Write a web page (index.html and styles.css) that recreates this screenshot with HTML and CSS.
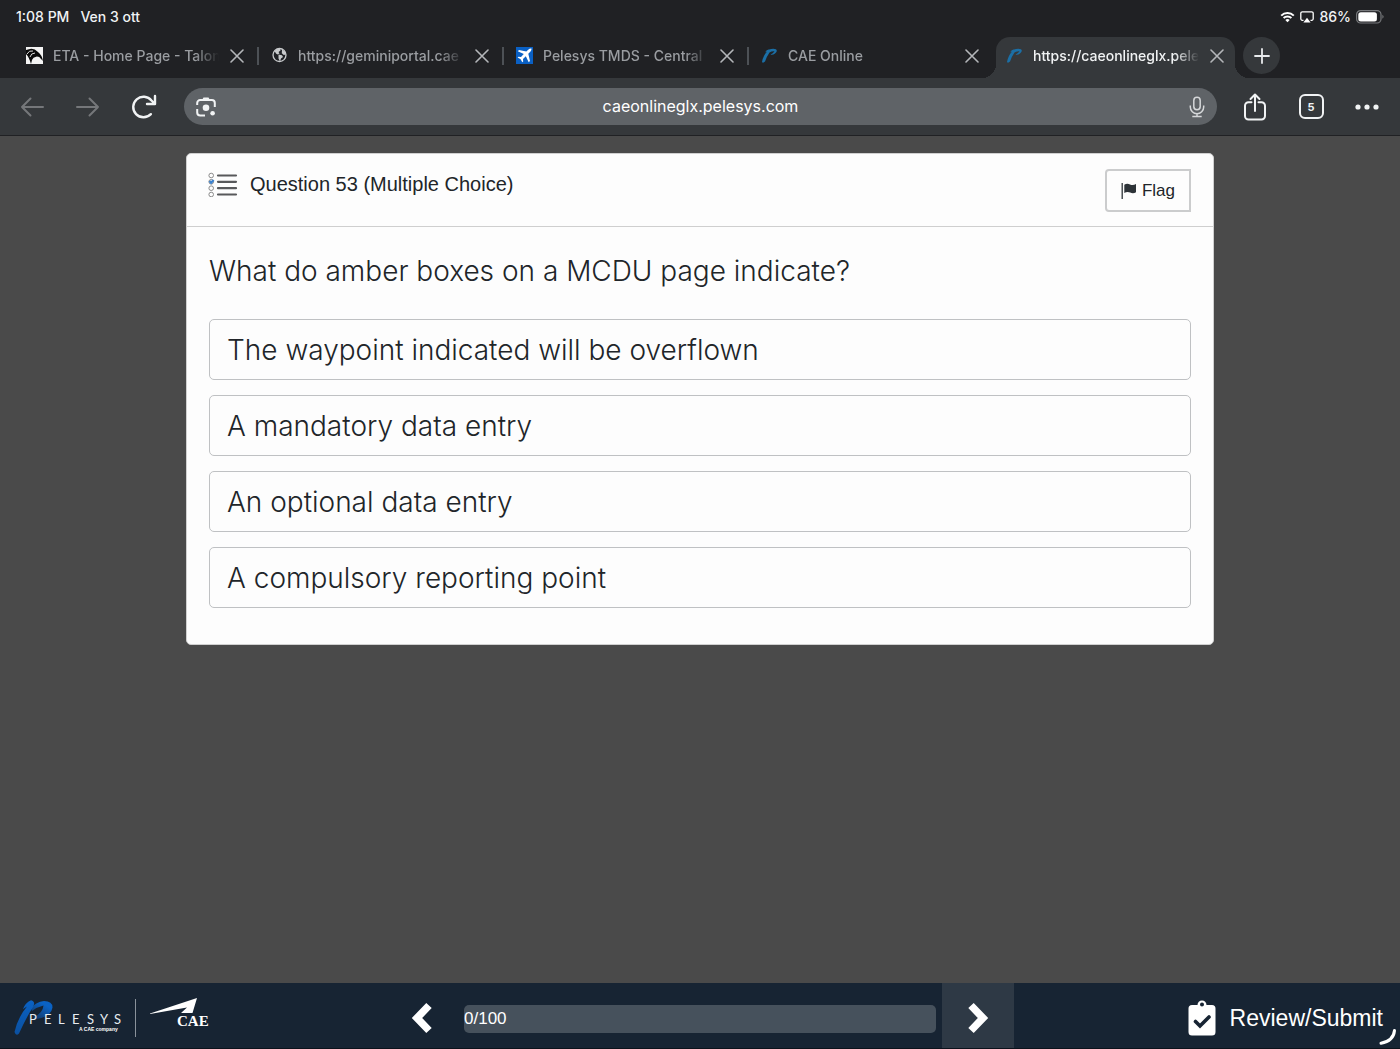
FILE: index.html
```html
<!DOCTYPE html>
<html lang="en">
<head>
<meta charset="utf-8">
<meta name="viewport" content="width=device-width, initial-scale=1">
<title>caeonlineglx.pelesys.com</title>
<link rel="stylesheet" href="styles.css">
</head>
<body>
<svg class="defs" width="0" height="0" aria-hidden="true">
  <symbol id="close" viewBox="0 0 14 14"><path d="M1 1l12 12M13 1L1 13" fill="none" stroke="currentColor" stroke-width="1.6" stroke-linecap="round"/></symbol>
  <symbol id="swoosh" viewBox="0 0 17 17"><path d="M1 15Q2 9 6 4.500L4 5.500Q6 2 8 2.500 12 1.300 15 2.200 17 4 14 6.500 11.500 8.500 9.500 7.500 12 6.500 13.500 4.200 10.500 4 8.500 5.500 6 9 4 14.500 2 16.500 1 15z" fill="#1b6fa6"/></symbol>
</svg>

<header class="browser">
  <div class="status">
    <span class="status-group"><span>1:08 PM</span><span>Ven 3 ott</span></span>
    <span class="status-group status-right">
      <svg width="15" height="12" viewBox="0 0 15 12"><path d="M1.200 4.600a9 9 0 0 1 12.600 0M3.600 7a5.600 5.600 0 0 1 7.800 0" fill="none" stroke="#fff" stroke-width="2"/><path d="M7.500 11.200L5.300 9a3.200 3.200 0 0 1 4.400 0z" fill="#fff"/></svg>
      <svg width="14" height="12" viewBox="0 0 14 12"><path d="M3.500 9.300H2.300A1.500 1.500 0 0 1 .8 7.800V2.300A1.500 1.500 0 0 1 2.300.8h9.400a1.500 1.500 0 0 1 1.500 1.500v5.500a1.500 1.500 0 0 1-1.500 1.500h-1.200" fill="none" stroke="#fff" stroke-width="1.300"/><path d="M7 6.800l3.600 4.700H3.400z" fill="#fff"/></svg>
      <span>86%</span>
      <svg width="28" height="14" viewBox="0 0 28 14"><rect x=".6" y=".6" width="24.400" height="12.400" rx="4" fill="none" stroke="#77797c" stroke-width="1.200"/><rect x="2.300" y="2.200" width="18.600" height="9.200" rx="2.500" fill="#fff"/><path d="M26.400 4.800q2.400 2 0 4z" fill="#77797c"/></svg>
    </span>
  </div>

  <nav class="tabs" aria-label="Tabs">
    <div class="tab">
      <svg width="17" height="17" viewBox="0 0 17 17"><rect width="17" height="17" fill="#f4f4f4"/><path d="M0 3L4 2Q8 1 12 5q4 3 5 9l-2-2a5 5 0 0 0-9 1L5 17Q3 10 0 7z" fill="#0b0b0b"/><path d="M1 7Q3 3 7 4M4 10q1-4 5-4" stroke="#ddd" fill="none"/><path d="M14 17l3-3v3zM0 8q3 3 4 9H0z" fill="#f4f4f4"/></svg>
      <a class="tab-title" href="#">ETA - Home Page - Talon</a>
      <button class="tab-close" aria-label="Close tab"><svg width="14" height="14"><use href="#close"/></svg></button>
    </div>
    <div class="tab">
      <svg width="17" height="17" viewBox="0 0 17 17"><circle cx="8.500" cy="8" r="6.500" fill="#1e2024" stroke="#c8cacc" stroke-width="1.300"/><path d="M3.500 4Q5.500 1.500 9 1.700L9.500 3.500 7.500 5 8.500 6.500 6.500 7.500 5 6.500zM7.500 7.500l3.500.8 1 1.700-2 1.500-1 3-1.500-3zM11 2.500l3 2 .8 3-2 .5-2-1.800z" fill="#c8cacc"/></svg>
      <a class="tab-title" href="#">https://geminiportal.cae</a>
      <button class="tab-close" aria-label="Close tab"><svg width="14" height="14"><use href="#close"/></svg></button>
    </div>
    <div class="tab">
      <svg width="17" height="17" viewBox="0 0 17 17"><rect width="17" height="17" fill="#0a60c4"/><path d="M15.500 1.500q-1.700-.4-3 .9L10.300 4.600 3 3 1.800 4.200 7.800 7.100 5 10l-2.500-.3-.9.900 3 1.700 1.700 3 .9-.9L7 12l2.800-2.800 2.900 6L14 14 12.300 6.700l2.200-2.200q1.300-1.300 1-3z" fill="#fff"/></svg>
      <a class="tab-title" href="#">Pelesys TMDS - Central</a>
      <button class="tab-close" aria-label="Close tab"><svg width="14" height="14"><use href="#close"/></svg></button>
    </div>
    <div class="tab tab-last">
      <svg width="17" height="17"><use href="#swoosh"/></svg>
      <a class="tab-title" href="#">CAE Online</a>
      <button class="tab-close" aria-label="Close tab"><svg width="14" height="14"><use href="#close"/></svg></button>
    </div>
    <div class="tab tab-active">
      <svg width="17" height="17"><use href="#swoosh"/></svg>
      <a class="tab-title" href="#" aria-current="page">https://caeonlineglx.pele</a>
      <button class="tab-close" aria-label="Close tab"><svg width="14" height="14"><use href="#close"/></svg></button>
    </div>
    <button class="tab-new" aria-label="New tab"><svg width="16" height="16" viewBox="0 0 16 16"><path d="M8 1v14M1 8h14" stroke="#e8eaed" stroke-width="1.800" stroke-linecap="round"/></svg></button>
  </nav>

  <div class="toolbar">
    <button class="tool tool-off" aria-label="Back"><svg width="24" height="20" viewBox="0 0 24 20"><path d="M23 10H2M10.500 1.500L2 10l8.500 8.500" fill="none" stroke="currentColor" stroke-width="2" stroke-linecap="round" stroke-linejoin="round"/></svg></button>
    <button class="tool tool-off" aria-label="Forward"><svg width="24" height="20" viewBox="0 0 24 20"><path d="M1 10h21M13.500 1.500L22 10l-8.500 8.500" fill="none" stroke="currentColor" stroke-width="2" stroke-linecap="round" stroke-linejoin="round"/></svg></button>
    <button class="tool" aria-label="Reload"><svg width="26" height="26" viewBox="0 0 26 26"><path d="M19.900 20.200A10.300 10.300 0 1 1 20.500 6.500L23.500 9.500M24 2v8h-8" fill="none" stroke="currentColor" stroke-width="2.400" stroke-linecap="round" stroke-linejoin="round"/></svg></button>
    <div class="omnibox">
      <button class="omni-btn" aria-label="Search with camera"><svg width="20" height="20" viewBox="0 0 20 20"><path d="M1.200 8V6A3 3 0 0 1 4.200 3H15.800a3 3 0 0 1 3 3v4M1.200 12v3.500a3 3 0 0 0 3 3H9" fill="none" stroke="#f1f3f4" stroke-width="2"/><path d="M6 3l1.500-2.500h5L14 3z" fill="#f1f3f4"/><circle cx="10" cy="10.800" r="3.300" fill="#f1f3f4"/><circle cx="16.600" cy="16.300" r="2.300" fill="#f1f3f4"/></svg></button>
      <input class="omni-input" type="text" value="caeonlineglx.pelesys.com" aria-label="Address">
      <button class="omni-btn" aria-label="Voice search"><svg width="16" height="22" viewBox="0 0 16 22"><rect x="4.800" y="1.300" width="6.400" height="12.400" rx="3.200" fill="none" stroke="#d5d7d9" stroke-width="1.500"/><path d="M1.300 9.500v1.500a6.700 6.700 0 0 0 13.400 0V9.500M8 17.700v3M3.300 20.500h9.400" fill="none" stroke="#d5d7d9" stroke-width="1.500"/></svg></button>
    </div>
    <button class="tool" aria-label="Share"><svg width="24" height="28" viewBox="0 0 24 28"><path d="M8.500 9.300H5.500A3.500 3.500 0 0 0 2 12.800v10.200a3.500 3.500 0 0 0 3.500 3.500h13a3.500 3.500 0 0 0 3.500-3.500V12.800a3.500 3.500 0 0 0-3.500-3.500h-3M12 18V2M7.500 6L12 1.500 16.500 6" fill="none" stroke="currentColor" stroke-width="2" stroke-linecap="round" stroke-linejoin="round"/></svg></button>
    <button class="tool" aria-label="5 open tabs"><span class="tab-count">5</span></button>
    <button class="tool" aria-label="Menu"><svg width="24" height="6" viewBox="0 0 24 6"><g fill="currentColor"><circle cx="3" cy="3" r="2.600"/><circle cx="12" cy="3" r="2.600"/><circle cx="21" cy="3" r="2.600"/></g></svg></button>
  </div>
</header>

<main class="page">
  <section class="card">
    <header class="card-head">
      <h1 class="card-title">
        <svg width="30" height="26" viewBox="0 0 30 26"><g fill="none" stroke="#8b8b8b"><circle cx="3.200" cy="4.500" r="2.300"/><circle cx="3.200" cy="10.800" r="2.300"/><circle cx="3.200" cy="17.200" r="2.300"/><circle cx="3.200" cy="23.500" r="2.300"/></g><path d="M1.500 10l1.600 1.800 2.500-2.800" stroke="#3d83cf" stroke-width="2.200" fill="none"/><path d="M10 4.500h18M10 10.800h18M10 17.200h18M10 23.500h18" stroke="#58595b" stroke-width="2.200" stroke-linecap="round"/></svg>
        Question 53 (Multiple Choice)
      </h1>
      <button class="flag"><svg width="16" height="16" viewBox="0 0 16 16"><path d="M1.200 0v16" stroke="#2d3338" stroke-width="1.300"/><path d="M3.300 1.700Q6 .2 9 1.400 12 2.600 15 1v8.200Q12.200 11 9.200 9.500 6 8.400 3.300 10z" fill="#2d3338"/></svg>Flag</button>
    </header>
    <div class="card-body">
      <p class="question">What do amber boxes on a MCDU page indicate?</p>
      <div class="answers">
        <button class="answer">The waypoint indicated will be overflown</button>
        <button class="answer">A mandatory data entry</button>
        <button class="answer">An optional data entry</button>
        <button class="answer">A compulsory reporting point</button>
      </div>
    </div>
  </section>
</main>

<footer class="footer">
  <div class="brands">
    <svg width="122" height="38" viewBox="0 0 122 38" role="img" aria-label="Pelesys, a CAE company">
      <defs><linearGradient id="blue" x1="0" y1="0" x2="0" y2="1"><stop offset="0" stop-color="#0a62c4"/><stop offset="1" stop-color="#0b50a0"/></linearGradient><linearGradient id="bowl" x1="1" y1="0" x2=".3" y2="1"><stop offset=".3" stop-color="#0a62c4"/><stop offset="1" stop-color="#123a6b"/></linearGradient></defs>
      <path d="M17 9Q22 3 30 2 38.500 2 38.500 8.500 37 18 21 20.500L19 19Q29 14 29.500 6.500 23 8 18 12z" fill="url(#bowl)"/>
      <path d="M.5 33Q4 18 13 7.500L9 10Q11 4 17 1.200 22 2.500 19 8 12 19 5 34.500 2 37.500 .5 33z" fill="url(#blue)"/>
      <g class="logo-word"><text x="15" y="25">P</text><text x="30" y="25">E</text><text x="44" y="25">L</text><text x="58" y="25">E</text><text x="73" y="25">S</text><text x="86" y="25">Y</text><text x="100" y="25">S</text></g>
      <text class="logo-sub" x="65" y="32">A CAE company</text>
    </svg>
    <span class="brand-rule"></span>
    <svg width="60" height="32" viewBox="0 0 60 32" role="img" aria-label="CAE">
      <path d="M0 15.500L47 0 42.500 15H31L37 9.500 0 16z" fill="#fff"/>
      <text class="logo-cae" x="27" y="28">CAE</text>
    </svg>
  </div>
  <div class="pager">
    <button class="pager-btn" aria-label="Previous question"><svg width="22" height="32" viewBox="0 0 22 32"><path d="M18 3.500L6 16l12 12.500" fill="none" stroke="#fff" stroke-width="7.500"/></svg></button>
    <div class="progress">0/100</div>
    <button class="pager-btn pager-next" aria-label="Next question"><svg width="22" height="32" viewBox="0 0 22 32"><path d="M4 3.500L16 16 4 28.500" fill="none" stroke="#fff" stroke-width="7.500"/></svg></button>
  </div>
  <div class="finish">
    <button class="submit"><svg width="28" height="36" viewBox="0 0 28 36"><path fill-rule="evenodd" d="M4 5h5.500a4.500 4.500 0 0 1 9 0H24a3.500 3.500 0 0 1 3.500 3.500V32a3.500 3.500 0 0 1-3.500 3.500H4A3.500 3.500 0 0 1 .5 32V8.500A3.500 3.500 0 0 1 4 5zm10-2.500a2 2 0 1 0 0 4 2 2 0 0 0 0-4z" fill="#fff"/><path d="M7.500 21.500l4.500 4.500 9-9" fill="none" stroke="#172433" stroke-width="3.600" stroke-linecap="round"/></svg>Review/Submit</button>
  </div>
  <svg class="spinner" width="18" height="18" viewBox="0 0 18 18" aria-hidden="true"><path d="M15.500 2.500Q14.500 13 2 15.200" fill="none" stroke="#fff" stroke-width="3" stroke-linecap="round"/></svg>
</footer>
</body>
</html>
```

FILE: styles.css
```css
* { box-sizing: border-box; }

body {
  display: flex;
  flex-direction: column;
  min-height: 100vh;
  margin: 0;
  background: #4a4a4a;
  color: #212529;
  font-family: "Liberation Sans", Arial, sans-serif;
}

button {
  padding: 0;
  border: 0;
  background: none;
  color: inherit;
  font: inherit;
}

svg { display: block; flex: none; }
.defs { position: absolute; }

/* Browser chrome */
.browser {
  background: #202124;
  font-family: Inter, sans-serif;
  color: #f1f3f4;
}

.status {
  display: flex;
  justify-content: space-between;
  align-items: center;
  height: 33px;
  padding: 0 16px;
  font-size: 14px;
  font-weight: 500;
}
.status-group { display: flex; align-items: center; gap: 11px; }
.status-right { gap: 5px; }

.tabs {
  display: flex;
  padding: 4px 13px 0;
}
.tab {
  display: flex;
  align-items: center;
  flex: 0 1 245px;
  min-width: 0;
  height: 41px;
  padding: 0 14px 4px 13px;
  color: #9a9da1;
  position: relative;
}
.tab::after {
  content: "";
  width: 2px;
  height: 18px;
  margin-right: -15px;
  margin-left: 13px;
  background: #4d5156;
}
.tab-last::after, .tab-active::after { background: none; }
.tab-title {
  flex: 1;
  min-width: 0;
  margin: 0 11px 0 10px;
  overflow: hidden;
  white-space: nowrap;
  color: inherit;
  font-size: 14px;
  font-weight: 500;
  line-height: 20px;
  text-decoration: none;
  -webkit-mask-image: linear-gradient(to left, transparent, #000 24px);
  mask-image: linear-gradient(to left, transparent, #000 24px);
}
.tab-close { color: #b4b6b9; }
.tab-active {
  flex-basis: 239px;
  margin: 0 3px;
  padding: 0 11px 4px 10px;
  border-radius: 14px 14px 0 0;
  background: #35383b;
  color: #f1f3f4;
}
.tab-active::before,
.tab-active::after {
  content: "";
  position: absolute;
  bottom: 0;
  width: 14px;
  height: 14px;
  margin: 0;
}
.tab-active::before {
  right: 100%;
  background: radial-gradient(circle at 0 0, transparent 14px, #35383b 14px);
}
.tab-active::after {
  left: 100%;
  background: radial-gradient(circle at 100% 0, transparent 14px, #35383b 14px);
}
.tab-new {
  display: grid;
  place-items: center;
  flex: none;
  width: 37px;
  height: 37px;
  margin-left: 5px;
  border-radius: 50%;
  background: #35383b;
}

.toolbar {
  display: flex;
  align-items: center;
  height: 58px;
  padding: 0 5px 0 4px;
  border-bottom: 1px solid #202124;
  background: #35383b;
}
.tool {
  display: grid;
  place-items: center;
  flex: none;
  width: 56px;
  height: 56px;
}
.tool-off { color: #75777a; }
.omnibox {
  display: flex;
  align-items: center;
  flex: 1;
  min-width: 0;
  height: 37px;
  margin: 0 10px 0 12px;
  padding: 0 12px;
  border-radius: 19px;
  background: #5f6367;
}
.omni-input {
  flex: 1;
  min-width: 0;
  padding: 0 4px 2px 0;
  border: 0;
  outline: 0;
  background: none;
  color: #fff;
  font: 16px/20px Inter, sans-serif;
  text-align: center;
}
.tab-count {
  display: grid;
  place-items: center;
  width: 25px;
  height: 25px;
  border: 2px solid currentColor;
  border-radius: 6px;
  font-size: 11px;
  font-weight: 700;
}

/* Question card */
.page { flex: 1; padding: 17px 16px; }
.card {
  max-width: 1028px;
  margin: 0 auto;
  border: 1px solid #d0d0d0;
  border-radius: 5px;
  background: #fdfdfd;
}
.card-head {
  display: flex;
  justify-content: space-between;
  align-items: flex-start;
  padding: 15px 22px 14px 21px;
  border-bottom: 1px solid #cfcfcf;
}
.card-title {
  display: flex;
  align-items: center;
  gap: 12px;
  margin: 2px 0 0;
  font-size: 20px;
  font-weight: 400;
  line-height: 26px;
}
.flag {
  display: flex;
  align-items: center;
  justify-content: center;
  gap: 5px;
  width: 86px;
  height: 43px;
  border: 2px solid #cbcccd;
  border-radius: 4px 0 0 4px;
  font-size: 17px;
}
.card-body { padding: 24px 22px 36px; }
.question {
  margin: 0 0 28px;
  font: 300 28px/40px Inter, sans-serif;
}
.answers { display: grid; gap: 15px; }
.answer {
  min-height: 61px;
  padding: 0 17px;
  border: 1px solid #bfc1c3;
  border-radius: 5px;
  font: 300 28px/40px Inter, sans-serif;
  text-align: left;
}

/* Bottom bar */
.footer {
  position: relative;
  display: grid;
  grid-template-columns: 1fr minmax(0, 628px) 1fr;
  height: 66px;
  border-bottom: 1px solid #0b121b;
  background: #172433;
  color: #fff;
}
.brands { display: flex; align-items: center; padding: 4px 0 0 14px; }
.logo-word { fill: #e8ecf0; font: 13px Lato, sans-serif; }
.logo-sub { fill: #fff; font: 700 5px "Liberation Sans", sans-serif; }
.logo-cae { fill: #fff; font: 700 15px "Liberation Serif", serif; }
.brand-rule { width: 1px; height: 38px; margin: 0 14px 0 -1px; background: #8a929b; }
.brands svg:last-child { margin-bottom: 7px; }
.pager { display: flex; align-items: center; }
.pager-btn {
  display: grid;
  place-items: center;
  flex: none;
  width: 72px;
  height: 100%;
  padding-top: 5px;
}
.pager-next { background: #2e3945; }
.progress {
  flex: 1;
  height: 28px;
  margin: 6px 6px 0;
  border-radius: 5px;
  background: #46515c;
  font-size: 17px;
  line-height: 28px;
}
.finish { display: flex; justify-content: flex-end; align-items: center; padding: 5px 17px 0 0; }
.submit { display: flex; align-items: center; gap: 14px; font-size: 23px; white-space: nowrap; }
.spinner { position: absolute; right: 3px; bottom: 2px; }
```
